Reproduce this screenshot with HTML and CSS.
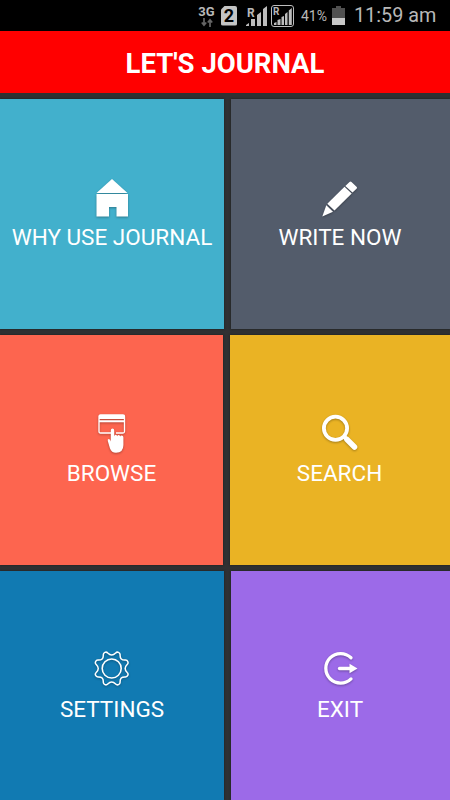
FILE: index.html
```html
<!DOCTYPE html>
<html lang="en">
<head>
    <meta charset="UTF-8">
    <meta name="viewport" content="width=device-width, initial-scale=1.0">
    <title>Let's Journal</title>
    <link rel="stylesheet" href="styles.css">
</head>
<body>
    <div class="status-bar">
        <div class="network">
            <span>3G</span>
            <svg width="12" height="9" viewBox="0 0 12 9" fill="none" stroke="#666" stroke-width="1.7">
                <path d="M3 0v7M.8 4.500L3 7.200l2.200-2.700M9 9V2M6.800 4.500L9 1.800l2.200 2.700"/>
            </svg>
        </div>
        <div class="sim">2</div>
        <div class="signal">
            <span>R</span>
            <svg width="22" height="20" viewBox="0 0 22 20" fill="#bdbdbd">
                <path d="M0 20v-1l3-2v3zM5 20v-7l4-2v9zM11 20V9l4-3v14zM17 20V3l4-3v20z"/>
            </svg>
        </div>
        <div class="signal boxed">
            <span>R</span>
            <svg width="18" height="17" viewBox="0 0 18 17" fill="#bdbdbd">
                <path d="M0 17v-2l2.500-1v3zM3.500 17v-5l3-1v6zM7.500 17V9l2.500-1v9zM11 17V6l2.500-2v13zM14.800 17V2.500l3-2.500v17z"/>
            </svg>
        </div>
        <span class="percent">41%</span>
        <svg class="battery" width="13" height="19" viewBox="0 0 13 19">
            <path d="M4 0h5v2h4v10H0V2h4z" fill="#505050"/>
            <path d="M0 12h13v7H0z" fill="#c8c8c8"/>
        </svg>
        <span class="clock">11:59 am</span>
    </div>

    <h1>LET'S JOURNAL</h1>

    <div class="menu">
        <a class="tile why">
            <svg class="icon" viewBox="0 0 40 40" fill="#fff">
                <path d="M20 1L35.500 15h-31z"/>
                <path d="M4.500 16H36v22.500H24.500V29H17v9.500H4.500z"/>
            </svg>
            <span>WHY USE JOURNAL</span>
        </a>
        <a class="tile write">
            <svg class="icon" viewBox="0 0 40 40" fill="#fff">
                <path d="M29.500 4q1-1 2 0l5 4.800q1 1 0 2l-4 3.700-7.200-6.500z"/>
                <path d="M24.500 8.800l7.200 6.700L14.500 32.500 7.300 25.800z"/>
                <path d="M6.300 27.200l6.700 6.500L2.300 38.400z"/>
            </svg>
            <span>WRITE NOW</span>
        </a>
        <a class="tile browse">
            <svg class="icon" viewBox="0 0 40 40">
                <path d="M19 19H8.500q-1.500 0-1.500-1.500V2.500Q7 1 8.500 1h22.500q1.500 0 1.500 1.500v15q0 1.500-1.500 1.500h-7" fill="none" stroke="#fff" stroke-width="1.300"/>
                <path d="M7 1h25.500v4H7zM7 6.300h25.500v1.900H7z" fill="#fff"/>
                <path d="M18.800 16.500q0-2 1.700-2t1.700 2v5.800q.3-1.500 1.500-1.500 1.300 0 1.500 1.500.3-1.300 1.500-1.300t1.500 1.500q.3-1 1.500-1 1.700 0 1.700 2V31q0 7.700-7.400 7.700-4.500 0-6-4.200l-2.200-7.500q-.5-2 1-2t2 2.500z" fill="#fff"/>
            </svg>
            <span>BROWSE</span>
        </a>
        <a class="tile search">
            <svg class="icon" viewBox="0 0 40 40" fill="none" stroke="#fff">
                <circle cx="15.500" cy="14.300" r="11.600" stroke-width="3.800"/>
                <path d="M24 22.500l3 3" stroke-width="4"/>
                <path d="M27 25.500l7.500 7.500" stroke-width="5.500" stroke-linecap="round"/>
            </svg>
            <span>SEARCH</span>
        </a>
        <a class="tile settings">
            <svg class="icon" viewBox="0 0 40 40" fill="none" stroke="#fff" stroke-width="1.600" stroke-linejoin="round">
                <circle cx="19.700" cy="18.500" r="9.500"/>
                <path transform="translate(19.700 18.500) scale(.95)" d="M4.160-16.300A2.700 2.700 0 0 1 8.860-14.400Q8.490-8.490 14.400-8.860A2.700 2.700 0 0 1 16.300-4.160Q12 0 16.300 4.160A2.700 2.700 0 0 1 14.400 8.860Q8.490 8.490 8.860 14.400A2.700 2.700 0 0 1 4.160 16.300Q0 12-4.160 16.300A2.700 2.700 0 0 1-8.860 14.400Q-8.490 8.490-14.400 8.860A2.700 2.700 0 0 1-16.300 4.160Q-12 0-16.300-4.160A2.700 2.700 0 0 1-14.400-8.860Q-8.490-8.490-8.860-14.400A2.700 2.700 0 0 1-4.160-16.300Q0-12 4.160-16.300z"/>
            </svg>
            <span>SETTINGS</span>
        </a>
        <a class="tile exit">
            <svg class="icon" viewBox="0 0 40 40" fill="none" stroke="#fff" stroke-width="3.300" stroke-linecap="round">
                <path d="M31 7.800A14.800 14.800 0 1 0 31 28.900"/>
                <path d="M19.500 18.500H31"/>
                <path d="M29.500 13.800l8 4.700-8 4.700z" fill="#fff" stroke="none"/>
            </svg>
            <span>EXIT</span>
        </a>
    </div>
</body>
</html>
```

FILE: styles.css
```css
* {
    box-sizing: border-box;
}
body {
    font-family: Roboto, sans-serif;
    margin: 0;
    height: 800px;
    display: flex;
    flex-direction: column;
    background-color: #2f3133;
    color: #fff;
    overflow: hidden;
}
.status-bar {
    display: flex;
    align-items: center;
    height: 31px;
    padding-left: 198px;
    background-color: #000;
    color: #b8b8b8;
    white-space: nowrap;
}
.network {
    display: flex;
    flex-direction: column;
    align-items: center;
    width: 17px;
    font-size: 13px;
    font-weight: bold;
    line-height: 13px;
}
.sim {
    width: 16px;
    height: 20px;
    margin-left: 6px;
    border-radius: 2px;
    background-color: #c4c4c4;
    clip-path: polygon(4px 0, 100% 0, 100% 100%, 0 100%, 0 4px);
    color: #000;
    font-size: 18px;
    font-weight: bold;
    line-height: 20px;
    text-align: center;
}
.signal {
    position: relative;
    display: flex;
    align-items: flex-end;
    justify-content: flex-end;
    width: 22px;
    height: 20px;
    margin-left: 9px;
}
.signal span {
    position: absolute;
    left: 1px;
    top: 1px;
    background-color: #000;
    font-size: 12px;
    font-weight: bold;
    line-height: 12px;
}
.signal.boxed {
    width: 23px;
    height: 22px;
    margin-left: 3px;
    padding: 1px;
    border: 1px solid #bdbdbd;
    border-radius: 3px;
}
.signal.boxed span {
    font-size: 10px;
    line-height: 10px;
}
.percent {
    width: 28px;
    margin-left: 7px;
    font-size: 14px;
}
.battery {
    margin-left: 3px;
}
.clock {
    margin-left: 9px;
    font-size: 19.8px;
}
h1 {
    height: 62px;
    margin: 0;
    background-color: #ff0000;
    font-size: 27.5px;
    font-weight: bold;
    line-height: 65px;
    text-align: center;
}
.menu {
    flex: 1;
    display: grid;
    grid-template-columns: 224px 219px;
    grid-template-rows: 230px 230px 229px;
    gap: 6px 7px;
    padding-top: 6px;
}
.tile {
    display: flex;
    flex-direction: column;
    align-items: center;
    padding-top: 79px;
    box-shadow: 0 0 2px #1c1c1c;
    font-size: 22.5px;
    line-height: 27px;
    white-space: nowrap;
}
.tile:nth-child(even) {
    padding-right: 1px;
}
.tile span {
    margin-top: 6px;
}
.icon {
    width: 40px;
    height: 40px;
    overflow: visible;
    filter: drop-shadow(0 1px 1px rgba(0, 0, 0, 0.3));
}
.why {
    background-color: #42b0cc;
}
.write {
    background-color: #535c6b;
}
.browse {
    margin-right: 1px;
    background-color: #fd654f;
}
.search {
    margin-left: -1px;
    background-color: #eab324;
}
.settings {
    background-color: #117ab2;
}
.exit {
    background-color: #9c6ae8;
}
```
